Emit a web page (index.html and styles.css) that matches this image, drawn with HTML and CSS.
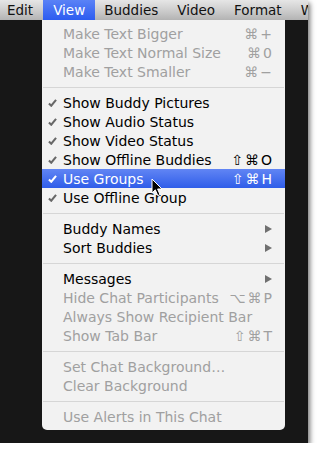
FILE: index.html
```html
<!DOCTYPE html>
<html lang="en">
<head>
  <meta charset="UTF-8">
  <title>View menu</title>
  <link rel="stylesheet" href="styles.css">
</head>
<body>
  <div class="screen">
    <div class="menubar">
      <span class="mb-item">Edit</span>
      <span class="mb-item active">View</span>
      <span class="mb-item">Buddies</span>
      <span class="mb-item">Video</span>
      <span class="mb-item">Format</span>
      <span class="mb-item">Window</span>
    </div>

    <div class="menu">
      <div class="row off"><span class="check"></span><span class="label">Make Text Bigger</span><span class="key">⌘+</span></div>
      <div class="row off"><span class="check"></span><span class="label">Make Text Normal Size</span><span class="key">⌘0</span></div>
      <div class="row off"><span class="check"></span><span class="label">Make Text Smaller</span><span class="key">⌘−</span></div>
      <div class="sep"></div>

      <div class="row"><span class="check"><svg viewBox="0 0 10 9"><path d="M1 5 L3.6 7.6 L9 1"/></svg></span><span class="label">Show Buddy Pictures</span></div>
      <div class="row"><span class="check"><svg viewBox="0 0 10 9"><path d="M1 5 L3.6 7.6 L9 1"/></svg></span><span class="label">Show Audio Status</span></div>
      <div class="row"><span class="check"><svg viewBox="0 0 10 9"><path d="M1 5 L3.6 7.6 L9 1"/></svg></span><span class="label">Show Video Status</span></div>
      <div class="row"><span class="check"><svg viewBox="0 0 10 9"><path d="M1 5 L3.6 7.6 L9 1"/></svg></span><span class="label">Show Offline Buddies</span><span class="key">⇧⌘O</span></div>
      <div class="row hl"><span class="check"><svg viewBox="0 0 10 9"><path d="M1 5 L3.6 7.6 L9 1"/></svg></span><span class="label">Use Groups</span><span class="key">⇧⌘H</span></div>
      <div class="row"><span class="check"><svg viewBox="0 0 10 9"><path d="M1 5 L3.6 7.6 L9 1"/></svg></span><span class="label">Use Offline Group</span></div>
      <div class="sep"></div>

      <div class="row"><span class="check"></span><span class="label">Buddy Names</span><span class="arrow"></span></div>
      <div class="row"><span class="check"></span><span class="label">Sort Buddies</span><span class="arrow"></span></div>
      <div class="sep"></div>

      <div class="row"><span class="check"></span><span class="label">Messages</span><span class="arrow"></span></div>
      <div class="row off"><span class="check"></span><span class="label">Hide Chat Participants</span><span class="key">⌥⌘P</span></div>
      <div class="row off"><span class="check"></span><span class="label">Always Show Recipient Bar</span></div>
      <div class="row off"><span class="check"></span><span class="label">Show Tab Bar</span><span class="key">⇧⌘T</span></div>
      <div class="sep"></div>

      <div class="row off"><span class="check"></span><span class="label">Set Chat Background…</span></div>
      <div class="row off"><span class="check"></span><span class="label">Clear Background</span></div>
      <div class="sep"></div>

      <div class="row off"><span class="check"></span><span class="label">Use Alerts in This Chat</span></div>
    </div>

    <svg class="cursor" viewBox="0 0 12 19" width="12" height="19">
      <path d="M1 1 L1 15 L4.3 11.8 L6.8 17.6 L9 16.6 L6.6 11 L11 11 Z" fill="#000" stroke="#fff" stroke-width="1"/>
    </svg>
  </div>
</body>
</html>
```

FILE: styles.css
```css
body { margin: 0; background: #fff; font-family: "DejaVu Sans", sans-serif; }
.screen { position: relative; width: 308px; height: 443px; background: #171717; overflow: hidden; box-shadow: 2px 3px 5px rgba(0,0,0,0.55); }

.menubar { display: flex; height: 20px; background: linear-gradient(#e6e6e6, #c9c9c9 60%, #b3b3b3); white-space: nowrap; overflow: hidden; }
.mb-item { padding: 0 9.5px; font-size: 13.5px; line-height: 20px; color: #111; }
.mb-item:first-child { padding: 0 10px 0 7px; }
.mb-item.active { padding: 0 9.5px 0 10px; color: #fff; background: linear-gradient(#5a82f6, #2c5cf0); }

.menu { width: 243px; margin-left: 42px; padding: 4px 0; background: #f2f2f2; border-radius: 0 0 5px 5px; font-size: 14px; }
.row { display: flex; align-items: center; height: 19px; padding-right: 13px; color: #000; }
.row.off { color: #a0a0a0; }
.row.hl { color: #fff; background: linear-gradient(#6185f4, #2f5de9); }
.check { width: 21px; flex: none; display: flex; justify-content: center; }
.check svg { width: 9px; height: 8px; fill: none; stroke: #686868; stroke-width: 2.3; }
.row.hl .check svg { stroke: #fff; }
.label { flex: 1; white-space: nowrap; }
.key { letter-spacing: 2px; margin-right: -2px; }
.arrow { width: 0; height: 0; border-left: 7px solid #707070; border-top: 4.5px solid transparent; border-bottom: 4.5px solid transparent; }
.sep { height: 1px; margin: 6px 1px 5px; background: #d6d6d6; }

.cursor { position: absolute; left: 151px; top: 178px; }
```
